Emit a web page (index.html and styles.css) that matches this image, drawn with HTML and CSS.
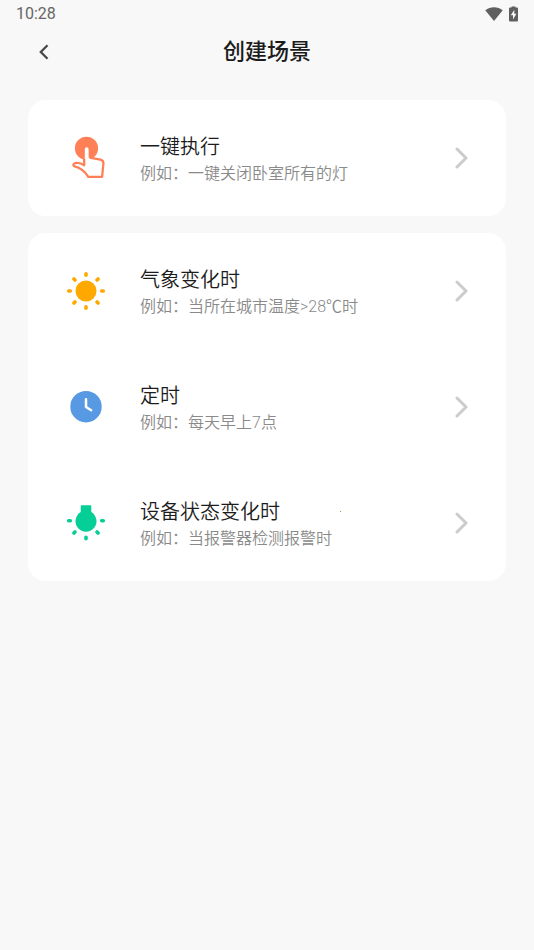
FILE: index.html
```html
<!DOCTYPE html>
<html lang="zh-CN">
<head>
<meta charset="utf-8">
<meta name="viewport" content="width=device-width, initial-scale=1">
<title>创建场景</title>
<link rel="stylesheet" href="styles.css">
</head>
<body>
<div class="status">
  <time>10:28</time>
  <div class="status-icons">
    <svg width="18" height="14" viewBox="0 0 18 14" aria-hidden="true"><path fill="#5f5f5f" d="M9 14 0.3 3.2C5.200-.8 12.800-.8 17.700 3.200Z"/></svg>
    <svg width="9" height="16" viewBox="0 0 9 16" aria-hidden="true"><path fill="#5f5f5f" d="M2.500 1.600V.5h4v1.100H8q1 0 1 1v12q0 1-1 1H1q-1 0-1-1v-12q0-1 1-1Z"/><path fill="#f8f8f8" d="M5.300 3.800 1.800 9.200H4v4.300L7.400 7.800H5.300Z"/></svg>
  </div>
</div>
<header class="header">
  <button class="back" type="button" aria-label="返回">
    <svg width="10" height="16" viewBox="0 0 10 16" aria-hidden="true"><path d="M8.500 1.200 1.800 8l6.700 6.800" fill="none" stroke="#484848" stroke-width="2.300"/></svg>
  </button>
  <h1>创建场景</h1>
</header>
<main class="content">
  <section class="card">
    <a class="item" href="#tap">
      <svg class="icon" viewBox="0 0 44 44" aria-hidden="true">
        <circle cx="22.500" cy="12.300" r="11.600" fill="#ff7f57"/>
        <path d="M20.800 29V13.200q0-1.900 1.900-1.900t1.900 1.900v8.200l11.600 2.200q3.300.7 3.100 3.700l-1.100 13.200H24.600Q20.500 34.800 10.300 31.300q-1.600-2 .7-3 4.600-1.900 9.800.7Z" fill="#fff"/>
        <path d="M20.200 23v6.300Q15.500 26 11 27.200q-2.700 1.100-.9 3 9.400 2.600 14.200 10.600h13.800l1.300-13.300q.2-3.200-3-3.900l-10.900-2" fill="none" stroke="#ff7f57" stroke-width="2.300" stroke-linejoin="round"/>
      </svg>
      <span class="text"><span class="name">一键执行</span><span class="hint">例如：一键关闭卧室所有的灯</span></span>
      <svg class="chevron" viewBox="0 0 14 22" aria-hidden="true"><path d="M2 2l9 9-9 9"/></svg>
    </a>
  </section>
  <section class="card">
    <a class="item" href="#weather">
      <svg class="icon" viewBox="0 0 44 44" aria-hidden="true">
        <circle cx="22" cy="22" r="10.500" fill="#ffa800"/>
        <path d="M22 4.700v1.600M22 37.700v1.600M4.700 22h1.600M37.700 22h1.600M9.900 9.900l1.100 1.100M33 33l1.100 1.100M34.100 9.900 33 11M11 33l-1.100 1.100" stroke="#ffa800" stroke-width="3.600" stroke-linecap="round"/>
      </svg>
      <span class="text"><span class="name">气象变化时</span><span class="hint">例如：当所在城市温度&gt;28℃时</span></span>
      <svg class="chevron" viewBox="0 0 14 22" aria-hidden="true"><path d="M2 2l9 9-9 9"/></svg>
    </a>
    <a class="item" href="#timer">
      <svg class="icon" viewBox="0 0 44 44" aria-hidden="true">
        <circle cx="22" cy="21.700" r="15.700" fill="#5799e3"/>
        <path d="M22 14.200v7.800l5.200 3.200" fill="none" stroke="#fff" stroke-width="2.500" stroke-linecap="round" stroke-linejoin="round"/>
      </svg>
      <span class="text"><span class="name">定时</span><span class="hint">例如：每天早上7点</span></span>
      <svg class="chevron" viewBox="0 0 14 22" aria-hidden="true"><path d="M2 2l9 9-9 9"/></svg>
    </a>
    <a class="item" href="#device">
      <svg class="icon" viewBox="0 0 44 44" aria-hidden="true">
        <path d="M17.500 4.200h9q.8 0 .8.800v6.100a10.500 10.500 0 1 1-10.600 0V5q0-.8.800-.8Z" fill="#05cf97"/>
        <path d="M22 36.200v1.600M4.700 19.800h1.600M37.700 19.800h1.600M33 31l1.100 1.100M11 31l-1.100 1.100" stroke="#05cf97" stroke-width="3.600" stroke-linecap="round"/>
      </svg>
      <span class="text"><span class="name">设备状态变化时</span><span class="hint">例如：当报警器检测报警时</span><i class="speck"></i></span>
      <svg class="chevron" viewBox="0 0 14 22" aria-hidden="true"><path d="M2 2l9 9-9 9"/></svg>
    </a>
  </section>
</main>
</body>
</html>
```
FILE: styles.css
```css
* {
  box-sizing: border-box;
}

body {
  margin: 0;
  min-height: 100vh;
  background: #f8f8f8;
  color: #1c1c1c;
  font-family: Roboto, "Noto Sans CJK SC", sans-serif;
}

.status {
  display: flex;
  align-items: center;
  justify-content: space-between;
  height: 28px;
  padding: 0 16px;
  color: #666;
  font-size: 16px;
  line-height: 28px;
}

.status-icons {
  display: flex;
  align-items: center;
  gap: 6px;
  height: 26px;
}

.header {
  display: grid;
  grid-template-columns: 32px 1fr 32px;
  align-items: center;
  height: 48px;
  padding: 0 28px;
}

.back {
  display: flex;
  align-items: center;
  justify-content: center;
  width: 32px;
  height: 32px;
  padding: 0;
  border: 0;
  background: none;
}

h1 {
  margin: 0;
  font-size: 22px;
  font-weight: 500;
  line-height: 32px;
  text-align: center;
}

.content {
  display: flex;
  flex-direction: column;
  gap: 17px;
  padding: 24px 28px;
}

.card {
  border-radius: 18px;
  background: #fff;
}

.item {
  display: flex;
  align-items: center;
  min-height: 116px;
  padding: 0 37px 0 36px;
  color: inherit;
  text-decoration: none;
}

.icon {
  flex: none;
  width: 44px;
  height: 44px;
}

.text {
  position: relative;
  display: flex;
  flex: 1;
  flex-direction: column;
  margin-left: 32px;
  padding-top: 4px;
}

.name {
  font-size: 20px;
  font-weight: 350;
  line-height: 28px;
}

.hint {
  color: #8a8a8a;
  font-size: 16px;
  font-weight: 350;
  line-height: 26px;
}

.speck {
  position: absolute;
  top: 17px;
  left: 200px;
  width: 1px;
  height: 1px;
  background: #a89a30;
}

.chevron {
  flex: none;
  width: 14px;
  height: 22px;
  fill: none;
  stroke: #ccc;
  stroke-width: 3;
  stroke-linecap: round;
  stroke-linejoin: round;
}
```
